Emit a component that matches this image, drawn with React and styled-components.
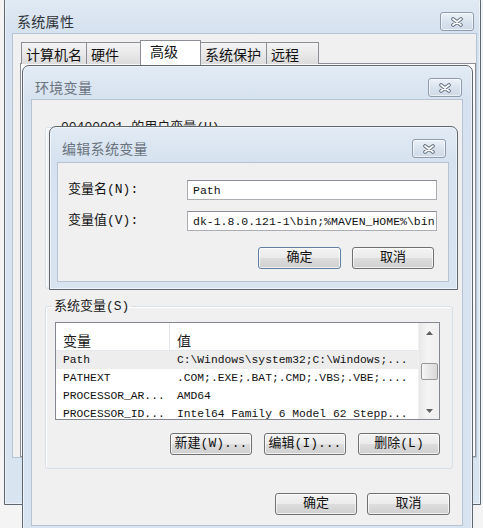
import React from "react";
import styled, { createGlobalStyle } from "styled-components";

const GlobalStyle = createGlobalStyle`
  html, body {
    margin: 0;
    padding: 0;
  }
  body {
    background: #f3f3f3;
    font-family: "Noto Sans CJK SC", sans-serif;
  }
  * {
    box-sizing: border-box;
  }
`;

const MIXED = `"Liberation Mono", "Noto Sans CJK SC", monospace`;

const systemVars = [
  { name: "Path", value: "C:\\Windows\\system32;C:\\Windows;...", active: true },
  { name: "PATHEXT", value: ".COM;.EXE;.BAT;.CMD;.VBS;.VBE;...." },
  { name: "PROCESSOR_AR...", value: "AMD64" },
  { name: "PROCESSOR_ID...", value: "Intel64 Family 6 Model 62 Stepp..." },
];

function CloseGlyph() {
  return (
    <svg width="14" height="10" viewBox="0 0 14 10">
      <path
        d="M3 2 L11 8 M11 2 L3 8"
        stroke="#5f6c7b"
        strokeWidth="3.6"
        strokeLinecap="round"
        fill="none"
      />
      <path
        d="M3 2 L11 8 M11 2 L3 8"
        stroke="#ffffff"
        strokeWidth="1.8"
        strokeLinecap="round"
        fill="none"
      />
    </svg>
  );
}

function Window({ x, y, w, h, title, bar, client, dim, children }) {
  return (
    <Frame $x={x} $y={y} $w={w} $h={h}>
      <TitleBar $h={bar.h} $pt={bar.pt} $pl={bar.pl} $pr={bar.pr}>
        <Title $dim={dim}>{title}</Title>
        <CloseButton>
          <CloseGlyph />
        </CloseButton>
      </TitleBar>
      <Client $ml={client.ml} $mr={client.mr} $mb={client.mb}>
        {children}
      </Client>
    </Frame>
  );
}

export default function App() {
  return (
    <Screen>
      <GlobalStyle />

      <Window
        x={4}
        y={-6}
        w={477}
        h={511}
        title="系统属性"
        bar={{ h: 38, pt: 14, pl: 12, pr: 6 }}
        client={{ ml: 7, mr: 3, mb: 46 }}
      >
        <TabStrip>
          <Tab $w={66}>计算机名</Tab>
          <Tab $w={55}>硬件</Tab>
          <Tab $w={61} $active>
            高级
          </Tab>
          <Tab $w={67}>系统保护</Tab>
          <Tab $w={53}>远程</Tab>
        </TabStrip>
        <TabPage />
      </Window>

      <Window
        x={22}
        y={65}
        w={451}
        h={480}
        title="环境变量"
        dim
        bar={{ h: 33, pt: 9, pl: 12, pr: 10 }}
        client={{ ml: 8, mr: 9, mb: 18 }}
      >
        <EnvBody>
          <Group $h={169} $labelLeft={4}>
            <legend>00400001 的用户变量(U)</legend>
          </Group>
          <Group $labelLeft={-3}>
            <legend>系统变量(S)</legend>
            <ListView>
              <ListMain>
                <ListHeader>
                  <HeadCell $w={114}>变量</HeadCell>
                  <HeadCell>值</HeadCell>
                </ListHeader>
                {systemVars.map((v) => (
                  <ListRow key={v.name} $active={v.active}>
                    <Cell $w={114}>{v.name}</Cell>
                    <Cell>{v.value}</Cell>
                  </ListRow>
                ))}
              </ListMain>
              <ScrollBar>
                <ScrollArrow>
                  <svg width="7" height="4" viewBox="0 0 7 4">
                    <path d="M0 4 L3.5 0 L7 4 Z" fill="#606060" />
                  </svg>
                </ScrollArrow>
                <ScrollThumb />
                <ScrollArrow $down>
                  <svg width="7" height="4" viewBox="0 0 7 4">
                    <path d="M0 0 L3.5 4 L7 0 Z" fill="#606060" />
                  </svg>
                </ScrollArrow>
              </ScrollBar>
            </ListView>
            <ButtonRow $gap={12} $mt={13}>
              <Button $w={82}>新建(W)...</Button>
              <Button $w={82}>编辑(I)...</Button>
              <Button $w={82}>删除(L)</Button>
            </ButtonRow>
          </Group>
          <ButtonRow $gap={10} $mt={14} $pr={12}>
            <Button $w={82}>确定</Button>
            <Button $w={83}>取消</Button>
          </ButtonRow>
        </EnvBody>
      </Window>

      <Window
        x={49}
        y={126}
        w={409}
        h={164}
        title="编辑系统变量"
        dim
        bar={{ h: 35, pt: 9, pl: 12, pr: 11 }}
        client={{ ml: 7, mr: 8, mb: 7 }}
      >
        <EditBody>
          <FieldGrid>
            <FieldLabel>变量名(N):</FieldLabel>
            <TextBox value="Path" readOnly />
            <FieldLabel>变量值(V):</FieldLabel>
            <TextBox value="dk-1.8.0.121-1\bin;%MAVEN_HOME%\bin" readOnly />
          </FieldGrid>
          <ButtonRow $gap={11} $mt={16} $pr={3}>
            <Button $w={83} $default>
              确定
            </Button>
            <Button $w={82}>取消</Button>
          </ButtonRow>
        </EditBody>
      </Window>
    </Screen>
  );
}

const Screen = styled.div`
  position: relative;
  width: 483px;
  height: 528px;
  overflow: hidden;
  background: #f4f4f4;
`;

const Frame = styled.div`
  position: absolute;
  left: ${(p) => p.$x}px;
  top: ${(p) => p.$y}px;
  width: ${(p) => p.$w}px;
  height: ${(p) => p.$h}px;
  display: flex;
  flex-direction: column;
  border: 1px solid #5e6670;
  border-radius: 7px 7px 0 0;
  background: linear-gradient(#e2ebf5 0px, #d6e2ef 34px, #d9e4f1 100%);
  box-shadow: inset 0 0 0 1px rgba(255, 255, 255, 0.55);
`;

const TitleBar = styled.div`
  flex: none;
  height: ${(p) => p.$h}px;
  padding: ${(p) => p.$pt}px ${(p) => p.$pr}px 0 ${(p) => p.$pl}px;
  display: flex;
  align-items: flex-start;
  justify-content: space-between;
`;

const Title = styled.div`
  height: 24px;
  line-height: 24px;
  font-size: 14px;
  color: ${(p) => (p.$dim ? "#6a737e" : "#2e3338")};
  letter-spacing: 0.3px;
`;

const CloseButton = styled.div`
  width: 34px;
  height: 19px;
  margin-top: 3px;
  display: flex;
  align-items: center;
  justify-content: center;
  border: 1px solid #8e9cad;
  border-radius: 3px;
  background: linear-gradient(#edf2f8, #d9e3ee 50%, #cfdae7);
  box-shadow: inset 0 0 0 1px rgba(255, 255, 255, 0.6);
`;

const Client = styled.div`
  flex: 1;
  margin: 0 ${(p) => p.$mr}px ${(p) => p.$mb}px ${(p) => p.$ml}px;
  background: #f0f0f0;
  border: 1px solid #b6c3d3;
  display: flex;
  flex-direction: column;
  min-height: 0;
`;

const TabStrip = styled.div`
  display: flex;
  align-items: flex-end;
  height: 30px;
  padding: 6px 0 0 9px;
`;

const Tab = styled.div`
  width: ${(p) => p.$w}px;
  height: ${(p) => (p.$active ? 25 : 22)}px;
  margin-left: -1px;
  margin-bottom: ${(p) => (p.$active ? -1 : 0)}px;
  border: 1px solid #8b8e95;
  border-bottom: none;
  background: ${(p) =>
    p.$active ? "#ffffff" : "linear-gradient(#f4f4f4, #e9e9e9 50%, #dcdcdc)"};
  position: relative;
  z-index: ${(p) => (p.$active ? 2 : 1)};
  padding: ${(p) => (p.$active ? "1px 0 0 9px" : "2px 0 0 4px")};
  font-size: 14px;
  line-height: 18px;
  color: #111;
`;

const TabPage = styled.div`
  margin: -1px 0 0 7px;
  height: 394px;
  border: 1px solid #8b8e95;
  background: #fbfbfb;
`;

const EnvBody = styled.div`
  display: flex;
  flex-direction: column;
  padding: 20px 0 0 13px;
`;

const Group = styled.fieldset`
  width: 408px;
  height: ${(p) => (p.$h ? `${p.$h}px` : "auto")};
  margin: 0 0 10px 0;
  padding: 8px 12px 13px 9px;
  border: 1px solid #d5dfe5;
  border-radius: 3px;
  box-shadow: inset 1px 1px 0 #ffffff;
  min-width: 0;

  legend {
    margin-left: ${(p) => p.$labelLeft}px;
    padding: 0 2px;
    font-family: ${MIXED};
    font-size: 13px;
    line-height: 15px;
    color: #1a1a1a;
  }
`;

const ListView = styled.div`
  display: flex;
  height: 98px;
  border: 1px solid #828790;
  background: #ffffff;
  overflow: hidden;
`;

const ListMain = styled.div`
  flex: 1;
  min-width: 0;
  display: flex;
  flex-direction: column;
`;

const ListHeader = styled.div`
  flex: none;
  display: flex;
  height: 28px;
  border-bottom: 1px solid #e3e6ea;
`;

const HeadCell = styled.div`
  width: ${(p) => (p.$w ? `${p.$w}px` : "auto")};
  flex: ${(p) => (p.$w ? "none" : 1)};
  border-right: ${(p) => (p.$w ? "1px solid #e3e6ea" : "none")};
  padding: 8px 0 0 7px;
  font-size: 14px;
  line-height: 18px;
  color: #1a1a1a;
`;

const ListRow = styled.div`
  flex: none;
  display: flex;
  height: 18px;
  background: ${(p) => (p.$active ? "#ededed" : "transparent")};
`;

const Cell = styled.div`
  width: ${(p) => (p.$w ? `${p.$w}px` : "auto")};
  flex: ${(p) => (p.$w ? "none" : 1)};
  padding-left: 7px;
  white-space: nowrap;
  overflow: hidden;
  font-family: "Liberation Mono", monospace;
  font-size: 11.3px;
  line-height: 18px;
  color: #111;
`;

const ScrollBar = styled.div`
  flex: none;
  width: 21px;
  display: flex;
  flex-direction: column;
  align-items: center;
  background: linear-gradient(90deg, #e8e8e8, #f4f4f4 40%, #f0f0f0);
  border-left: 1px solid #f0f0f0;
`;

const ScrollArrow = styled.div`
  height: 19px;
  width: 100%;
  display: flex;
  align-items: center;
  justify-content: center;
  margin-top: ${(p) => (p.$down ? "auto" : "0")};
  padding-top: ${(p) => (p.$down ? "3px" : "0")};
`;

const ScrollThumb = styled.div`
  width: 17px;
  height: 17px;
  margin-top: 21px;
  border: 1px solid #989898;
  border-radius: 2px;
  background: linear-gradient(90deg, #f6f6f6, #e6e6e6 50%, #d8d8d8);
`;

const ButtonRow = styled.div`
  display: flex;
  justify-content: flex-end;
  gap: ${(p) => p.$gap}px;
  margin-top: ${(p) => p.$mt}px;
  padding-right: ${(p) => p.$pr || 0}px;
`;

const Button = styled.button`
  width: ${(p) => p.$w}px;
  height: 22px;
  padding: 0;
  border: 1px solid ${(p) => (p.$default ? "#5f7fa3" : "#707070")};
  border-radius: 3px;
  background: linear-gradient(#f3f3f3 0%, #ebebeb 48%, #dddddd 52%, #cfcfcf 100%);
  box-shadow: inset 0 0 0 1px rgba(255, 255, 255, 0.7);
  font-family: ${MIXED};
  font-size: 13px;
  line-height: 18px;
  color: #111;
`;

const EditBody = styled.div`
  display: flex;
  flex-direction: column;
  padding: 17px 11px 0 10px;
`;

const FieldGrid = styled.div`
  display: grid;
  grid-template-columns: 119px 250px;
  row-gap: 11px;
  align-items: center;
`;

const FieldLabel = styled.div`
  font-family: ${MIXED};
  font-size: 13px;
  line-height: 18px;
  color: #111;
`;

const TextBox = styled.input`
  width: 250px;
  height: 20px;
  padding: 0 0 0 5px;
  border: 1px solid #abadb3;
  border-top-color: #8c8f98;
  background: #ffffff;
  font-family: "Liberation Mono", monospace;
  font-size: 11.5px;
  color: #111;
  outline: none;
`;
